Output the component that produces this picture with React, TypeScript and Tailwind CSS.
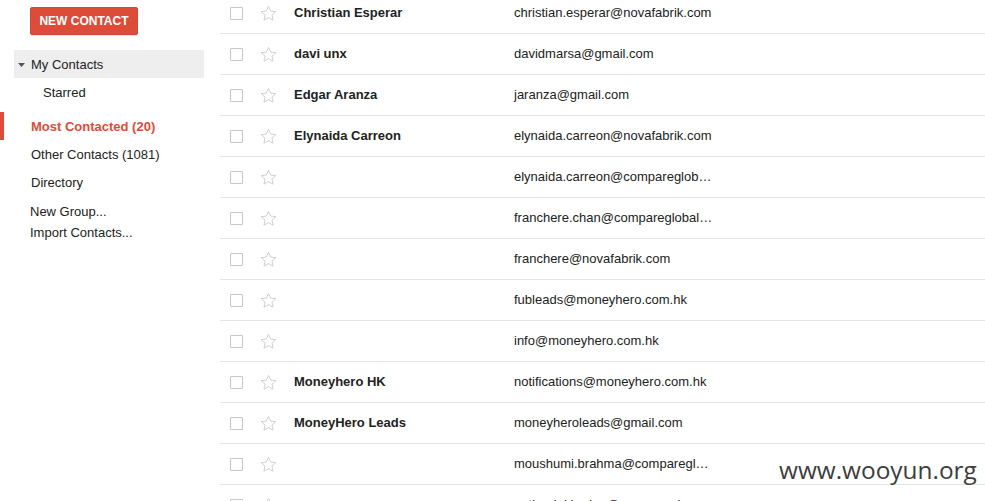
import React from "react";

const rows: { name: string; email: string }[] = [
  { name: "Christian Esperar", email: "christian.esperar@novafabrik.com" },
  { name: "davi unx", email: "davidmarsa@gmail.com" },
  { name: "Edgar Aranza", email: "jaranza@gmail.com" },
  { name: "Elynaida Carreon", email: "elynaida.carreon@novafabrik.com" },
  { name: "", email: "elynaida.carreon@compareglob…" },
  { name: "", email: "franchere.chan@compareglobal…" },
  { name: "", email: "franchere@novafabrik.com" },
  { name: "", email: "fubleads@moneyhero.com.hk" },
  { name: "", email: "info@moneyhero.com.hk" },
  { name: "Moneyhero HK", email: "notifications@moneyhero.com.hk" },
  { name: "MoneyHero Leads", email: "moneyheroleads@gmail.com" },
  { name: "", email: "moushumi.brahma@comparegl…" },
  { name: "", email: "nathaniel.hodge@compareglo…" },
];

function Star() {
  return (
    <svg width="17" height="17" viewBox="0 0 24 23" className="block">
      <path
        d="M12 1.5l3.1 6.6 7.2.8-5.4 4.9 1.5 7.1L12 17.3l-6.4 3.6 1.5-7.1L1.7 8.9l7.2-.8z"
        fill="none"
        stroke="#c8c8c8"
        strokeWidth="1.2"
        strokeLinejoin="round"
      />
    </svg>
  );
}

export default function App() {
  return (
    <div
      className="flex w-[985px] h-[501px] overflow-hidden bg-white text-[13px] text-[#222]"
      style={{ fontFamily: "Arial, 'Liberation Sans', sans-serif" }}
    >
      <div className="w-[220px] shrink-0 flex flex-col">
        <div className="pl-[30px] pt-[7px]">
          <div className="w-[108px] h-[28px] bg-[#dd4b39] border border-[#d14836] rounded-[2px] flex items-center justify-center text-white font-bold text-[12px] shadow-[0_1px_1px_rgba(0,0,0,0.1)]">
            NEW CONTACT
          </div>
        </div>
        <div className="mt-[15px] ml-[14px] w-[190px] h-[28px] bg-[#eeeeee] flex items-center pt-[1px]">
          <svg width="7" height="4" viewBox="0 0 7 4" className="ml-[4px] mr-[6px]">
            <path d="M0 0h7L3.5 4z" fill="#555" />
          </svg>
          <span>My Contacts</span>
        </div>
        <div className="h-[28px] flex items-center pl-[43px] pt-[2px]">Starred</div>
        <div className="h-[6px]" />
        <div className="h-[28px] flex items-center relative">
          <div className="absolute left-0 top-0 w-[4px] h-[28px] bg-[#dd4b39]" />
          <span className="pl-[31px] pt-[2px] font-bold text-[#dd4b39]">Most Contacted (20)</span>
        </div>
        <div className="h-[28px] flex items-center pl-[31px] pt-[2px]">Other Contacts (1081)</div>
        <div className="h-[28px] flex items-center pl-[31px] pt-[2px]">Directory</div>
        <div className="h-[22px] mt-[4px] flex items-center pl-[30px] pt-[2px]">New Group...</div>
        <div className="h-[20px] flex items-center pl-[30px] pt-[2px]">Import Contacts...</div>
      </div>
      <div className="flex-1 relative">
        <div className="-mt-[7px]">
          {rows.map((r, i) => (
            <div key={i} className="h-[41px] border-b border-[#e5e5e5] flex items-center">
              <div className="w-[13px] h-[13px] border border-[#c6c6c6] rounded-[1px] ml-[10px] shrink-0" />
              <div className="ml-[17px] w-[17px] shrink-0">
                <Star />
              </div>
              <div className="ml-[17px] w-[220px] shrink-0 font-bold truncate">{r.name}</div>
              <div className="whitespace-nowrap">{r.email}</div>
            </div>
          ))}
        </div>
        <div
          className="absolute left-[559px] top-[454px] text-[24.4px] leading-[32px] text-[#3d3d3d]"
          style={{ fontFamily: "'Open Sans', sans-serif" }}
        >
          www.wooyun.org
        </div>
      </div>
    </div>
  );
}
